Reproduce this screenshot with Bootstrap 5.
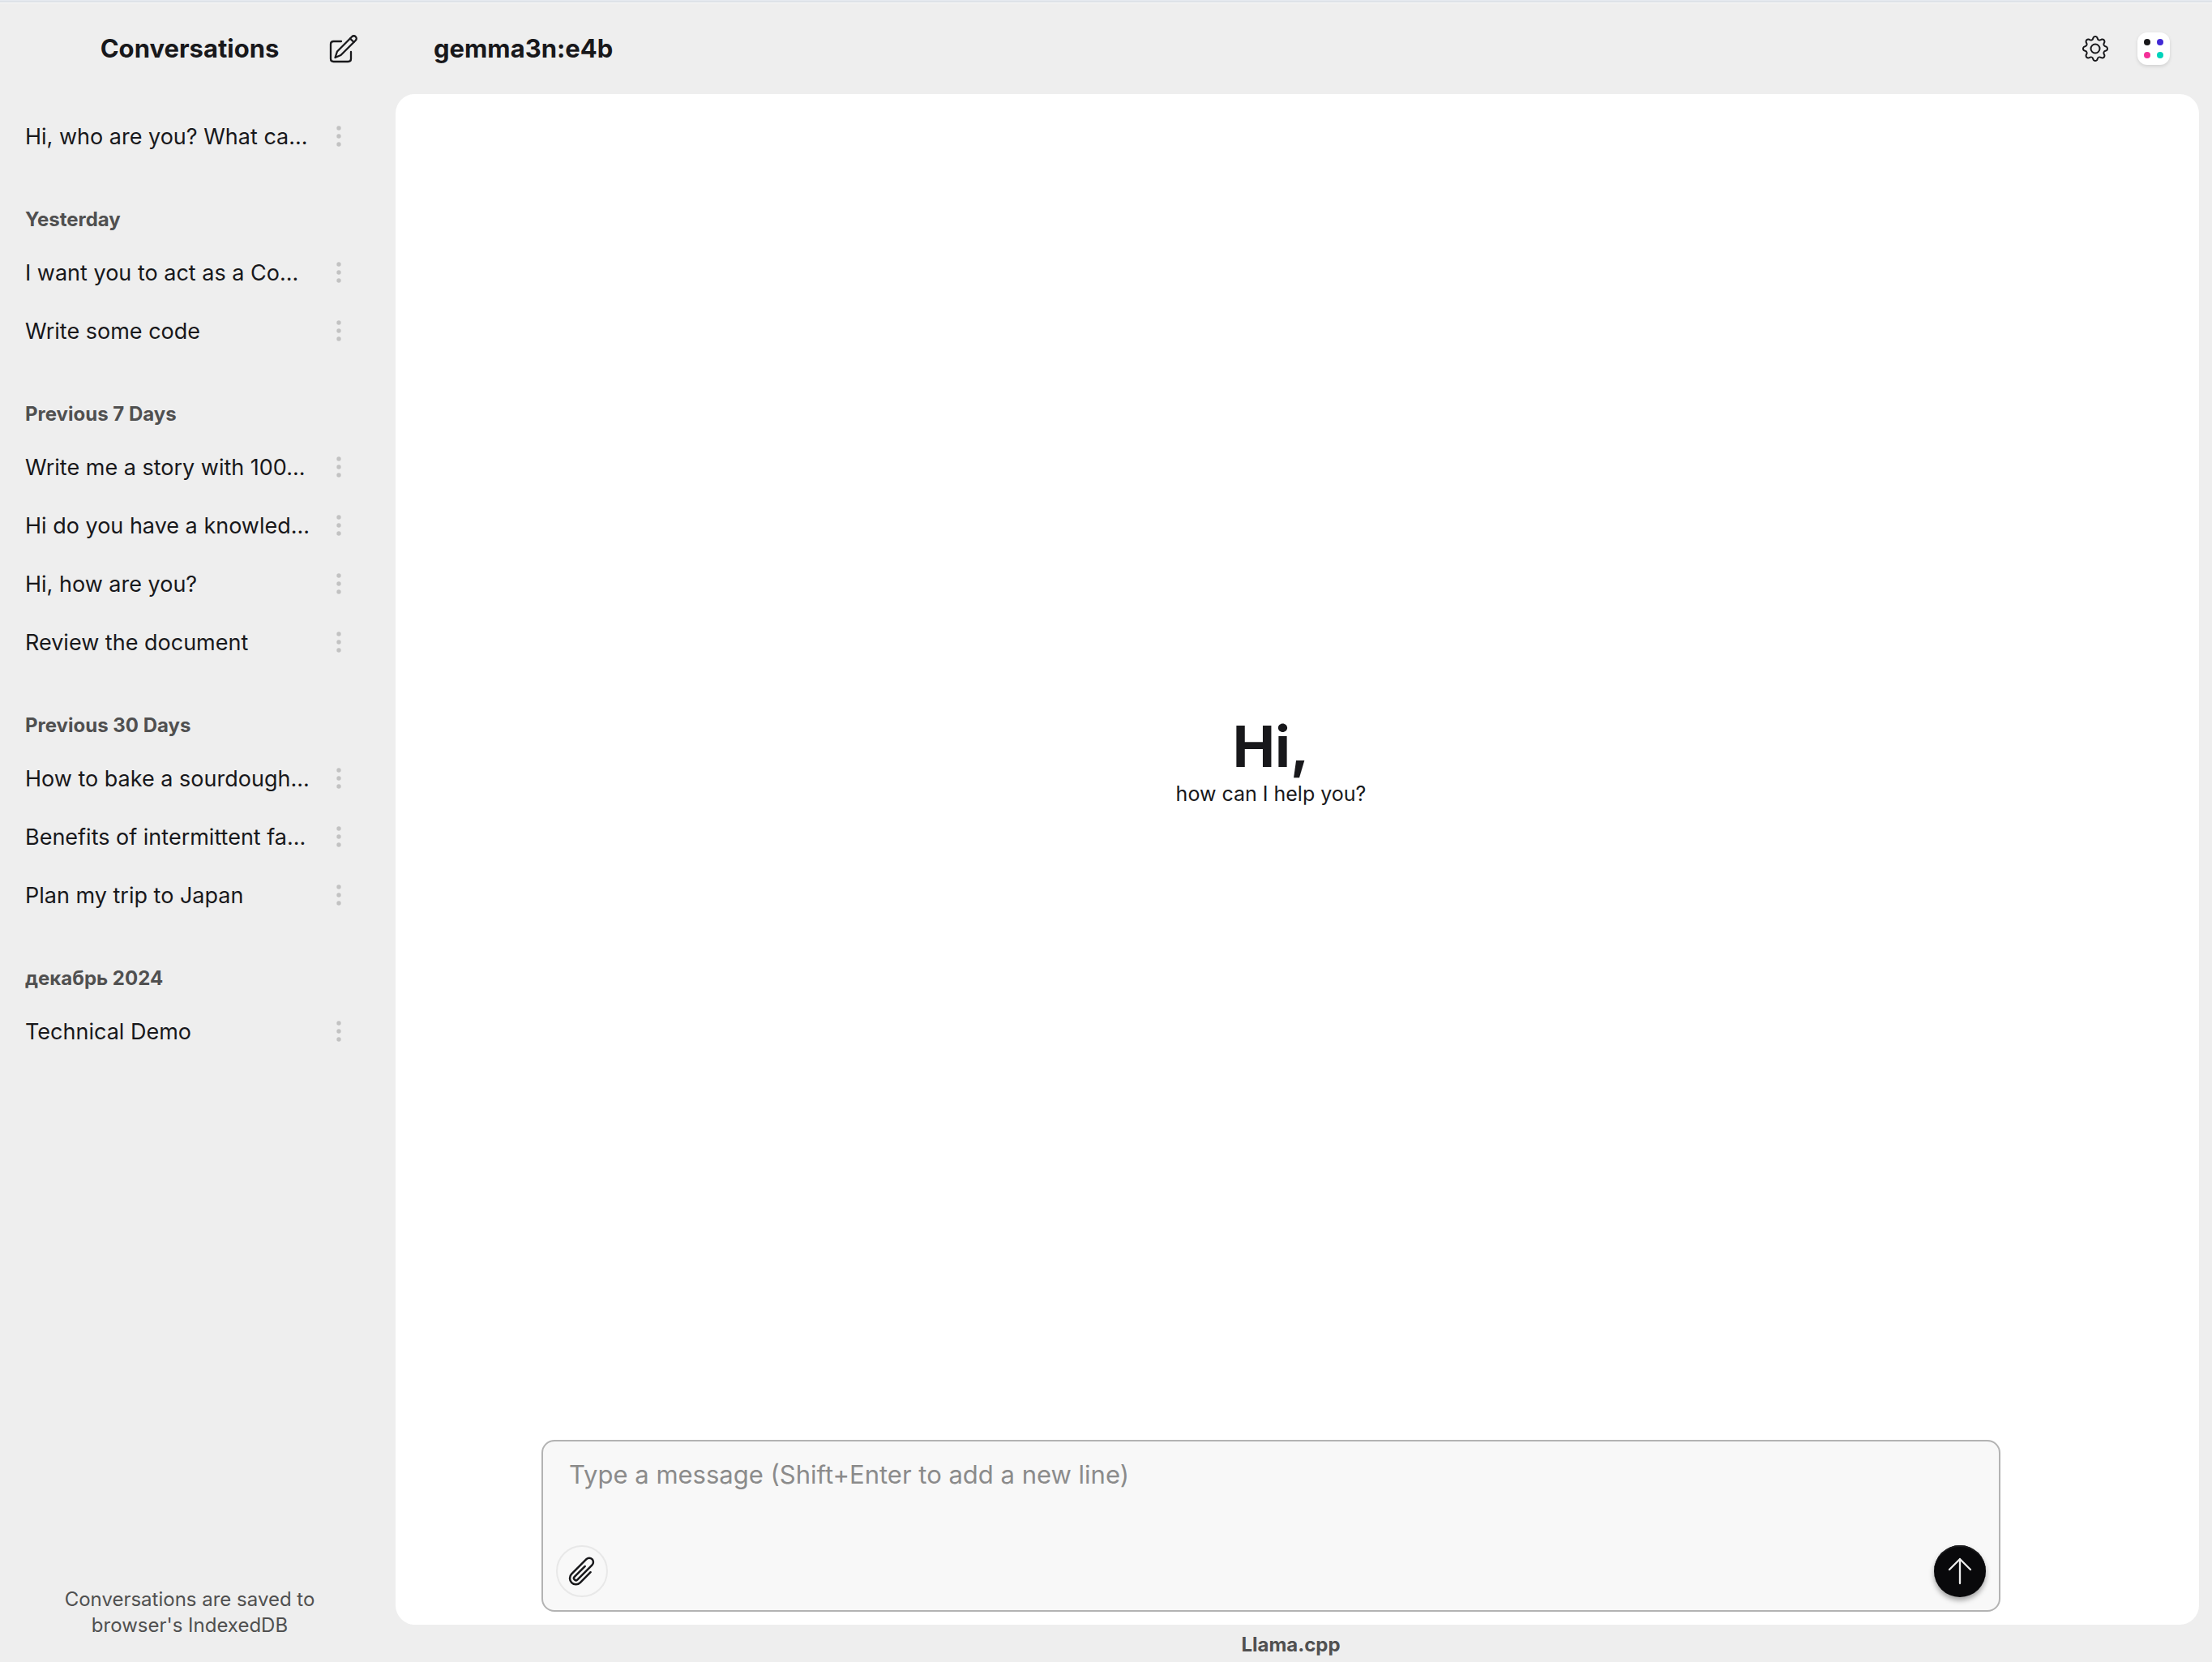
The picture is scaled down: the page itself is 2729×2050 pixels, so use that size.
<!DOCTYPE html>
<html lang="en">
<head>
<meta charset="utf-8">
<meta name="viewport" content="width=device-width, initial-scale=1">
<title>gemma3n:e4b</title>
<link rel="stylesheet" href="https://cdn.jsdelivr.net/npm/bootstrap@5.3.0/dist/css/bootstrap.min.css">
<style>
  body { font-family: Inter, "Noto Sans", sans-serif; background: #eee; color: #18181b; font-size: 27px; line-height: 40px; }
  .top-edge { height: 4px; background: #e5e9ef; border-bottom: 1px solid #fff; box-shadow: inset 0 -1px #cfd4d9; }
  .side { width: 468px; padding: 0 16px; }
  .bar { height: 112px; }
  .bar-title { font-size: 31px; font-weight: 700; line-height: 40px; margin: 0; }
  .icon-btn { border: 0; padding: 0; background: none; color: #18181b; display: flex; align-items: center; justify-content: center; }
  .bar-slot { width: 40px; }
  .side-bar { padding: 0 8px; }
  .chat-list { padding: 16px 0 0; }
  .chat-row { height: 72px; padding: 0 14px 0 15px; }
  .chat-row a { color: inherit; text-decoration: none; padding-top: 2px; }
  .chat-row .icon-btn { width: 40px; height: 40px; color: #c2c2c2; }
  .group-title { font-size: 24px; font-weight: 700; line-height: 32px; color: #505050; margin: 0; padding: 51px 15px 13px; }
  .side-note { font-size: 24px; line-height: 32px; color: #505050; padding: 0 48px 29px; margin: 0; }
  .main-col { padding-right: 16px; margin-left: 20px; min-width: 0; }
  .main-bar { padding: 0 36px 0 47px; }
  .bar-tools { gap: 36px; }
  .swatch { width: 40px; height: 40px; border-radius: 12px; background: #fff; box-shadow: 0 2px 4px rgba(0,0,0,.12); }
  .panel { background: #fff; border-radius: 24px; padding: 0 65px 16px 0; }
  .inner { width: 100%; max-width: 1800px; }
  .hello { padding-bottom: 14px; }
  .hello h1 { font-size: 70px; font-weight: 700; line-height: 80px; margin: 0; }
  .hello p { font-size: 25px; line-height: 36px; margin: 0; }
  .composer { border: 2px solid #b3b3b3; border-radius: 16px; background: #f8f8f8; padding: 16px; }
  .composer textarea { border: 0; background: none; resize: none; outline: 0; height: 112px; padding: 5px 16px; font-size: 31px; line-height: 40px; color: #18181b; }
  .composer textarea::placeholder { color: #8b8b8b; opacity: 1; }
  .round { width: 64px; height: 64px; border-radius: 50%; }
  .round-clip { border: 2px solid #e8e8e8; }
  .round-send { background: #09090b; color: #ededed; box-shadow: inset 0 2px #1b1b1d, 0 4px 6px rgba(0,0,0,.35); }
  .foot { height: 46px; font-size: 24px; font-weight: 700; line-height: 32px; color: #505050; padding: 9px 16px 0 0; }
</style>
</head>
<body>
<svg class="d-none" xmlns="http://www.w3.org/2000/svg">
  <symbol id="dots" viewBox="0 0 40 40"><g fill="currentColor"><circle cx="20" cy="10" r="2.7"/><circle cx="20" cy="20" r="2.7"/><circle cx="20" cy="30" r="2.7"/></g></symbol>
</svg>
<div class="d-flex flex-column vh-100">
  <div class="top-edge flex-shrink-0"></div>
  <div class="d-flex flex-grow-1">
    <aside class="side d-flex flex-column flex-shrink-0">
      <div class="bar side-bar d-flex align-items-center justify-content-between">
        <span class="bar-slot"></span>
        <h2 class="bar-title">Conversations</h2>
        <button class="icon-btn bar-slot" type="button" aria-label="New conversation">
          <svg width="36" height="36" viewBox="0 0 36 36" fill="none" stroke="currentColor" stroke-width="2.3" stroke-linecap="round" stroke-linejoin="round"><path d="M15 9H5.500Q2 9 2 12.500V30.500Q2 34 5.500 34H23.500Q27 34 27 30.500V22"/><path d="M7.500 29L10 21.500L28.200 3.200A3 3 0 0 1 32.800 7.800L14.500 26Z"/><path d="M26 5.500L30.500 10"/></svg>
        </button>
      </div>
      <nav class="chat-list flex-grow-1" id="chats"></nav>
      <p class="side-note text-center">Conversations are saved to browser's IndexedDB</p>
    </aside>
    <div class="main-col d-flex flex-column flex-grow-1">
      <header class="bar main-bar d-flex align-items-center justify-content-between">
        <h2 class="bar-title">gemma3n:e4b</h2>
        <div class="bar-tools d-flex align-items-center">
          <button class="icon-btn" type="button" aria-label="Settings">
            <svg width="32" height="32" viewBox="0 0 16 16" fill="currentColor"><path d="M8 4.754a3.246 3.246 0 1 0 0 6.492 3.246 3.246 0 0 0 0-6.492zM5.754 8a2.246 2.246 0 1 1 4.492 0 2.246 2.246 0 0 1-4.492 0z"/><path d="M9.796 1.343c-.527-1.79-3.065-1.79-3.592 0l-.094.319a.873.873 0 0 1-1.255.52l-.292-.16c-1.64-.892-3.433.902-2.540 2.541l.159.292a.873.873 0 0 1-.52 1.255l-.319.094c-1.79.527-1.79 3.065 0 3.592l.319.094a.873.873 0 0 1 .52 1.255l-.16.292c-.892 1.64.901 3.434 2.541 2.540l.292-.159a.873.873 0 0 1 1.255.52l.094.319c.527 1.79 3.065 1.79 3.592 0l.094-.319a.873.873 0 0 1 1.255-.52l.292.16c1.64.893 3.434-.902 2.540-2.541l-.159-.292a.873.873 0 0 1 .52-1.255l.319-.094c1.79-.527 1.79-3.065 0-3.592l-.319-.094a.873.873 0 0 1-.52-1.255l.16-.292c.893-1.64-.902-3.433-2.541-2.540l-.292.159a.873.873 0 0 1-1.255-.52l-.094-.319zm-2.633.283c.246-.835 1.428-.835 1.674 0l.094.319a1.873 1.873 0 0 0 2.693 1.115l.291-.16c.764-.415 1.6.42 1.184 1.185l-.159.292a1.873 1.873 0 0 0 1.116 2.692l.318.094c.835.246.835 1.428 0 1.674l-.319.094a1.873 1.873 0 0 0-1.115 2.693l.16.291c.415.764-.42 1.6-1.185 1.184l-.291-.159a1.873 1.873 0 0 0-2.693 1.116l-.094.318c-.246.835-1.428.835-1.674 0l-.094-.319a1.873 1.873 0 0 0-2.692-1.115l-.292.16c-.764.415-1.6-.42-1.184-1.185l.159-.291A1.873 1.873 0 0 0 1.945 8.93l-.319-.094c-.835-.246-.835-1.428 0-1.674l.319-.094A1.873 1.873 0 0 0 3.060 4.377l-.16-.292c-.415-.764.42-1.6 1.185-1.184l.292.159a1.873 1.873 0 0 0 2.692-1.115l.094-.319z"/></svg>
          </button>
          <button class="icon-btn swatch" type="button" aria-label="Theme">
            <svg width="40" height="40" viewBox="0 0 40 40"><circle cx="12" cy="12" r="4" fill="#18181b"/><circle cx="28" cy="12" r="4" fill="#422ad5"/><circle cx="12" cy="28" r="4" fill="#f43098"/><circle cx="28" cy="28" r="4" fill="#00d3bb"/></svg>
          </button>
        </div>
      </header>
      <main class="panel d-flex flex-column align-items-center flex-grow-1">
        <div class="hello inner flex-grow-1 d-flex flex-column align-items-center justify-content-center">
          <h1>Hi,</h1>
          <p>how can I help you?</p>
        </div>
        <form class="composer inner">
          <textarea class="d-block w-100" aria-label="Message" placeholder="Type a message (Shift+Enter to add a new line)"></textarea>
          <div class="d-flex justify-content-between">
            <button class="icon-btn round round-clip" type="button" aria-label="Attach file">
              <svg width="40" height="40" viewBox="0 0 24 24" fill="none" stroke="currentColor" stroke-width="1.5" stroke-linecap="round" stroke-linejoin="round"><path d="m18.375 12.739-7.693 7.693a4.500 4.500 0 0 1-6.364-6.364l10.940-10.940A3 3 0 1 1 19.500 7.372L8.552 18.320m.009-.010-.010.010m5.699-9.941-7.810 7.810a1.500 1.500 0 0 0 2.112 2.130"/></svg>
            </button>
            <button class="icon-btn round round-send" type="button" aria-label="Send">
              <svg width="32" height="36" viewBox="0 0 32 36" fill="none" stroke="currentColor" stroke-width="2.3" stroke-linecap="round" stroke-linejoin="round"><path d="M16 33V3M3 16L16 3L29 16"/></svg>
            </button>
          </div>
        </form>
      </main>
      <footer class="foot text-center">Llama.cpp</footer>
    </div>
  </div>
</div>
<script>
  const groups = [
    ["", ["Hi, who are you? What ca..."]],
    ["Yesterday", ["I want you to act as a Co...", "Write some code"]],
    ["Previous 7 Days", ["Write me a story with 100...", "Hi do you have a knowled...", "Hi, how are you?", "Review the document"]],
    ["Previous 30 Days", ["How to bake a sourdough...", "Benefits of intermittent fa...", "Plan my trip to Japan"]],
    ["декабрь 2024", ["Technical Demo"]]
  ];
  document.getElementById("chats").innerHTML = groups.map(([title, rows]) =>
    (title ? `<h3 class="group-title">${title}</h3>` : "") +
    rows.map(r => `<div class="chat-row d-flex align-items-center justify-content-between"><a class="text-nowrap" href="#">${r}</a><button class="icon-btn flex-shrink-0" type="button" aria-label="More"><svg width="40" height="40"><use href="#dots"/></svg></button></div>`).join("")
  ).join("");
</script>
<script src="https://cdn.jsdelivr.net/npm/bootstrap@5.3.0/dist/js/bootstrap.bundle.min.js"></script>
</body>
</html>
